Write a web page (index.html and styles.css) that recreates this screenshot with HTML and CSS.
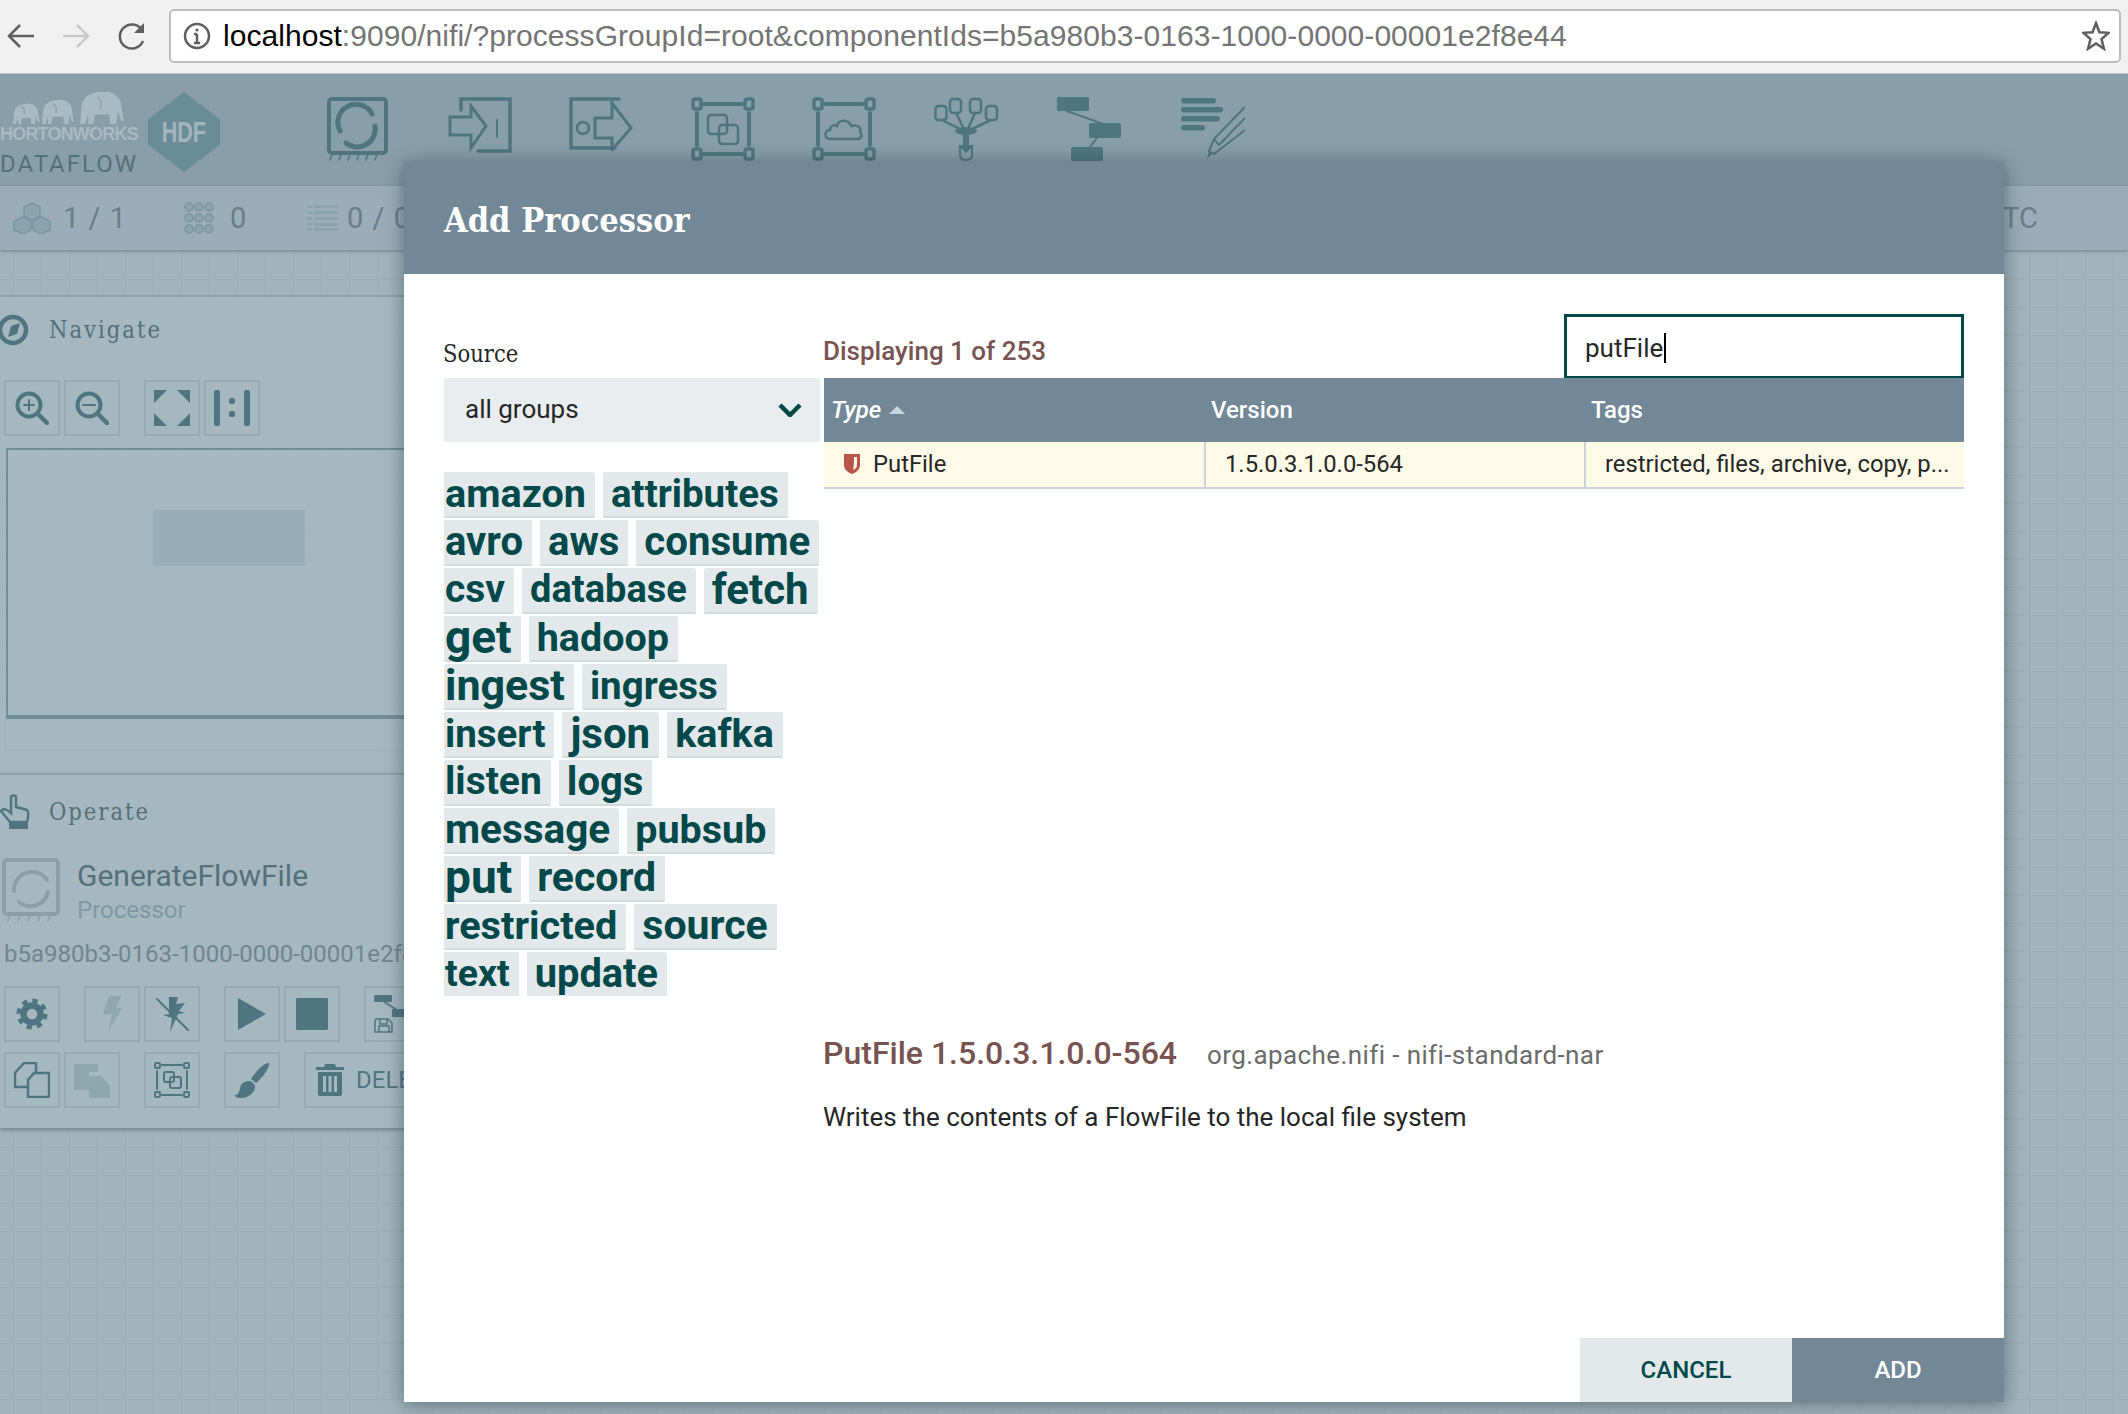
FILE: index.html
```html
<!DOCTYPE html>
<html lang="en">
<head>
    <meta charset="UTF-8">
    <title>NiFi</title>
    <link rel="stylesheet" href="styles.css">
</head>
<body>

<!-- browser chrome -->
<div class="browser-bar">
    <svg class="nav-icon nav-back" width="28" height="28" viewBox="0 0 28 28"><path d="M27 14H3M13 3L2 14l11 11"/></svg>
    <svg class="nav-icon nav-forward" width="28" height="28" viewBox="0 0 28 28"><path d="M1 14h24M15 3l11 11-11 11"/></svg>
    <svg class="nav-icon nav-reload" width="30" height="28" viewBox="0 0 30 28"><path d="M25 19a12 12 0 1 1-1-11"/><path class="solid" d="M26 1v10H16z"/></svg>
    <div class="address-box">
        <svg class="info-icon" width="28" height="28" viewBox="0 0 28 28"><circle cx="14" cy="14" r="12"/><path d="M14 12v9M11 21h6M11 12h3"/><circle class="dot" cx="14" cy="8" r="1.6"/></svg>
        <span class="url"><span class="url-host">localhost</span>:9090/nifi/?processGroupId=root&amp;componentIds=b5a980b3-0163-1000-0000-00001e2f8e44</span>
        <svg class="star-icon" width="28" height="30" viewBox="0 0 28 30"><path d="M14 2l3.400 9.200 9.100.6-7 6.300 2.400 9.600-7.900-5.300-7.900 5.300 2.400-9.600-7-6.300 9.100-.6z"/></svg>
    </div>
</div>

<div class="app">

    <div class="app-header">
        <div class="logo">
            <div class="logo-text">
                <svg class="elephants" width="126" height="32" viewBox="0 0 126 32">
                    <path transform="translate(13 12)" d="M0 20L1 8C2 3 7 0 13 0c6-1 11 2 12 8l1 8 1 2h-2l-2-6-1 8h-4v-6H9l-1 6H5v-6l-2 6z"/>
                    <path transform="translate(42 8) scale(1.200)" d="M0 20L1 8C2 3 7 0 13 0c6-1 11 2 12 8l1 8 1 2h-2l-2-6-1 8h-4v-6H9l-1 6H5v-6l-2 6z"/>
                    <path transform="translate(80 0) scale(1.650 1.600)" d="M0 20L1 8C2 3 7 0 13 0c6-1 11 2 12 8l1 8 1 2h-2l-2-6-1 8h-4v-6H9l-1 6H5v-6l-2 6z"/>
                    <path class="elephant-ear" d="M21 15c3 0 4 3 3 7M53 12c3 1 4 4 3 9M97 5c4 2 5 7 3 13"/>
                </svg>
                <div class="logo-brand">HORTONWORKS</div>
                <div class="logo-product">DATAFLOW</div>
            </div>
            <div class="logo-hex"><span>HDF</span></div>
        </div>

        <div class="toolbar">
            <svg width="64" height="64" viewBox="0 0 64 64"><rect class="line" x="3" y="2" width="57" height="54" rx="3" stroke-width="4"/><path class="line" d="M14 34A18 18 0 0 1 46 17M49 29A18 18 0 0 1 20 46" stroke-width="5"/><path class="line" d="M6 57l-2 6M15 57l-2 6M24 57l-2 6M33 57l-2 6M42 57l-2 6M51 57l-2 6" stroke-width="1.500"/></svg>
            <svg width="64" height="56" viewBox="0 0 64 56"><path class="line" d="M13 13V2h49v52H30" stroke-width="3.500"/><path class="line" d="M2 20h21V9l15 20-15 22V38H2z" stroke-width="3"/><path class="line" d="M49 23v17" stroke-width="2"/></svg>
            <svg width="64" height="54" viewBox="0 0 64 54"><path class="line" d="M50 2H2v49h44" stroke-width="3.500"/><circle class="line" cx="14" cy="31" r="6" stroke-width="2.500"/><path class="line" d="M26 21h17V6l19 25-19 22V41H26z" stroke-width="3"/></svg>
            <svg width="64" height="64" viewBox="0 0 64 64"><g class="line" stroke-width="3.500"><rect x="2" y="2" width="8" height="10" rx="2"/><rect x="54" y="2" width="8" height="10" rx="2"/><rect x="2" y="52" width="8" height="10" rx="2"/><rect x="54" y="52" width="8" height="10" rx="2"/><path stroke-width="4" d="M13 7h38M13 57h38M6 16v32M58 16v32"/><rect stroke-width="2.500" x="17" y="18" width="19" height="19" rx="3"/><rect stroke-width="2.500" x="28" y="28" width="19" height="19" rx="3"/></g></svg>
            <svg width="64" height="64" viewBox="0 0 64 64"><g class="line" stroke-width="3.500"><rect x="2" y="2" width="8" height="10" rx="2"/><rect x="54" y="2" width="8" height="10" rx="2"/><rect x="2" y="52" width="8" height="10" rx="2"/><rect x="54" y="52" width="8" height="10" rx="2"/><path stroke-width="4" d="M13 7h38M13 57h38M6 16v32M58 16v32"/><path stroke-width="2.500" d="M18 42c-6 0-6-9 0-9 0-4 4-6 7-4 1-7 12-7 14 0 7-2 11 2 9 6 3 3 1 7-3 7z"/></g></svg>
            <svg width="66" height="64" viewBox="0 0 66 64"><g class="line" stroke-width="2.500"><rect x="1.500" y="9" width="11" height="14" rx="3"/><rect x="16" y="2" width="11" height="14" rx="3"/><rect x="36" y="2" width="11" height="14" rx="3"/><rect x="52" y="9" width="11" height="14" rx="3"/><path d="M8 23l20 10M22 16l8 16M41 16l-7 16M57 23l-21 10"/><path d="M26 59v-9M38 50v9a6 4 0 0 1-12 0" stroke-width="2"/></g><ellipse class="solid" cx="32" cy="34" rx="11" ry="4"/><path class="solid" d="M29 36h6v12h5l-8 8-8-8h5z"/></svg>
            <svg width="66" height="64" viewBox="0 0 66 64"><g class="solid"><rect x="0" y="0" width="32" height="14" rx="2"/><rect x="32" y="26" width="32" height="15" rx="2"/><rect x="14" y="50" width="32" height="14" rx="2"/></g><path class="line" d="M10 14l36 13M40 41l-8 10" stroke-width="2"/></svg>
            <svg width="64" height="64" viewBox="0 0 64 64"><g class="solid"><rect x="0" y="1" width="35" height="5.500" rx="2.700"/><rect x="0" y="10" width="42" height="5.500" rx="2.700"/><rect x="0" y="19" width="39" height="5.500" rx="2.700"/><rect x="0" y="28" width="24" height="5.500" rx="2.700"/><path d="M26 62l2-9 4 3z"/></g><path class="line" d="M64 10L33 42l-5 12 5 3 31-24M64 21L38 48M33 42l4 5" stroke-width="2"/></svg>
        </div>
    </div>

    <div class="stats-bar">
        <svg class="stat-icon" width="38" height="32" viewBox="0 0 38 32"><g class="solid stat-outline"><path d="M19 1l8 4v9l-8 4-8-4V5z"/><path d="M10 15l8 4v9l-8 4-9-4v-9z"/><path d="M28 15l9 4v9l-9 4-8-4v-9z"/></g></svg>
        <span class="stat-value stat-procs">1 / 1</span>
        <svg class="stat-icon stat-dots" width="30" height="32" viewBox="0 0 30 32"><g class="solid stat-outline"><circle cx="5" cy="5" r="4"/><circle cx="15" cy="5" r="4"/><circle cx="25" cy="5" r="4"/><circle cx="5" cy="16" r="4"/><circle cx="15" cy="16" r="4"/><circle cx="25" cy="16" r="4"/><circle cx="5" cy="27" r="4"/><circle cx="15" cy="27" r="4"/><circle cx="25" cy="27" r="4"/></g></svg>
        <span class="stat-value stat-threads">0</span>
        <svg class="stat-icon stat-list" width="31" height="26" viewBox="0 0 31 26"><g class="solid"><rect y="0" width="5" height="3"/><rect x="7" y="0" width="24" height="3"/><rect y="6" width="5" height="3"/><rect x="7" y="6" width="24" height="3"/><rect y="12" width="5" height="3"/><rect x="7" y="12" width="24" height="3"/><rect y="18" width="5" height="3"/><rect x="7" y="18" width="24" height="3"/><rect y="23" width="5" height="3"/><rect x="7" y="23" width="24" height="3"/></g></svg>
        <span class="stat-value stat-queue">0 / 0</span>
        <span class="stat-value stat-time">UTC</span>
    </div>

    <div class="canvas">

        <div class="panel panel-navigate">
            <div class="panel-title">
                <svg class="panel-icon" width="32" height="32" viewBox="0 0 32 32"><circle class="line" cx="15" cy="16" r="13" stroke-width="4.500"/><path class="solid" d="M22 9l-3 11-9 3 3-11z"/></svg>
                <span>Navigate</span>
            </div>
            <div class="btn-row">
                <div class="btn-group">
                    <div class="tool-btn"><svg width="34" height="34" viewBox="0 0 34 34"><circle class="line" cx="14" cy="14" r="11.500" stroke-width="4"/><path class="line" d="M23 23l9 9" stroke-width="4.500"/><path class="line" d="M9 14h10M14 9v10" stroke-width="2"/></svg></div>
                    <div class="tool-btn"><svg width="34" height="34" viewBox="0 0 34 34"><circle class="line" cx="14" cy="14" r="11.500" stroke-width="4"/><path class="line" d="M23 23l9 9" stroke-width="4.500"/><path class="line" d="M8 14h12" stroke-width="2"/></svg></div>
                </div>
                <div class="btn-group">
                    <div class="tool-btn"><svg width="36" height="36" viewBox="0 0 36 36"><path class="solid" d="M0 0h13L0 13zM36 0v13L23 0zM0 36V23l13 13zM36 36H23l13-13z"/></svg></div>
                    <div class="tool-btn"><svg width="36" height="36" viewBox="0 0 36 36"><g class="solid"><rect x="0" width="6" height="36" rx="2"/><rect x="30" width="6" height="36" rx="2"/><rect x="15" y="8" width="6" height="6" rx="2"/><rect x="15" y="21" width="6" height="6" rx="2"/></g></svg></div>
                </div>
            </div>
            <div class="birdseye"><div class="birdseye-view"></div></div>
            <div class="birdseye-foot"></div>
        </div>

        <div class="panel panel-operate">
            <div class="panel-title">
                <svg class="panel-icon" width="30" height="36" viewBox="0 0 30 36"><path class="line" d="M11 17V3c0-2 5-2 5 0v10l11 3c2 1 1 9 0 12H10L1 17c2-3 6-2 10 2z" stroke-width="2.500"/><path class="solid" d="M9 28h19v7H9z"/></svg>
                <span>Operate</span>
            </div>
            <div class="selection">
                <svg class="selection-icon" width="60" height="64" viewBox="0 0 60 64"><rect class="grey-line" x="2" y="2" width="54" height="54" rx="3" stroke-width="4"/><path class="grey-line" d="M12 33A18 18 0 0 1 45 22M46 34A18 18 0 0 1 17 44" stroke-width="4"/><path class="grey-line" d="M8 57l-2 6M18 57l-2 6M28 57l-2 6M38 57l-2 6M48 57l-2 6" stroke-width="1.500"/></svg>
                <div>
                    <div class="selection-name">GenerateFlowFile</div>
                    <div class="selection-type">Processor</div>
                </div>
            </div>
            <div class="selection-id">b5a980b3-0163-1000-0000-00001e2f8e44</div>
            <div class="btn-row btn-row-first">
                <div class="btn-group">
                    <div class="tool-btn"><svg width="32" height="32" viewBox="0 0 32 32"><circle class="dash" cx="16" cy="16" r="13" stroke-width="5" stroke-dasharray="5.200 5"/><circle class="line" cx="16" cy="16" r="8.500" stroke-width="6.500"/></svg></div>
                </div>
                <div class="btn-group">
                    <div class="tool-btn"><svg class="faded" width="20" height="36" viewBox="0 0 20 36"><path class="solid" d="M7 0h12l-5 12h6L6 36l4-18H1z"/></svg></div>
                    <div class="tool-btn"><svg width="34" height="36" viewBox="0 0 34 36"><path class="solid" d="M14 1h9l-2 7 9-1-6 8 6 2-7 1-8 18 2-14-9-3 6-1z"/><path class="line" d="M2 3l31 31" stroke-width="2"/></svg></div>
                </div>
                <div class="btn-group">
                    <div class="tool-btn"><svg width="28" height="32" viewBox="0 0 28 32"><path class="solid" d="M0 0l28 16L0 32z"/></svg></div>
                    <div class="tool-btn"><svg width="32" height="32" viewBox="0 0 32 32"><rect class="solid" width="32" height="32" rx="1"/></svg></div>
                </div>
                <div class="btn-group">
                    <div class="tool-btn"><svg width="36" height="38" viewBox="0 0 36 38"><g class="solid"><rect width="18" height="7" rx="1"/><rect x="18" y="14" width="18" height="8" rx="1"/></g><path class="line" d="M9 6l14 9M1 26a2 2 0 0 1 2-2h11l4 4v9H1zM6 24v5h7v-5M5 37v-6h10v6" stroke-width="1.500"/></svg></div>
                </div>
            </div>
            <div class="btn-row btn-row-tight">
                <div class="btn-group">
                    <div class="tool-btn"><svg width="36" height="36" viewBox="0 0 36 36"><path class="line" d="M14 25H1V11l9-10h12v9" stroke-width="2.500"/><path class="line" d="M14 35V18l6-7h15v24z" stroke-width="2.500"/></svg></div>
                    <div class="tool-btn"><svg class="faded" width="36" height="36" viewBox="0 0 36 36"><path class="solid" d="M0 2h24v8h-9v18H0z"/><path class="solid" d="M15 14h12l9 10v12H15z"/></svg></div>
                </div>
                <div class="btn-group">
                    <div class="tool-btn"><svg width="36" height="36" viewBox="0 0 36 36"><g class="line" stroke-width="2"><rect x="1" y="1" width="5" height="5" rx="1"/><rect x="30" y="1" width="5" height="5" rx="1"/><rect x="1" y="30" width="5" height="5" rx="1"/><rect x="30" y="30" width="5" height="5" rx="1"/><path d="M8 3h20M8 33h20M3 9v18M33 9v18"/><rect x="10" y="10" width="10" height="10" rx="2"/><rect x="16" y="15" width="11" height="11" rx="2"/></g></svg></div>
                </div>
                <div class="btn-group">
                    <div class="tool-btn"><svg width="36" height="36" viewBox="0 0 36 36"><path class="solid" d="M35 1c1 4-6 15-13 20l-5-4C22 9 31 0 35 1zM15 19c3 0 6 3 6 6 0 6-7 11-14 11-4 0-6-1-7-3 4 1 5-3 6-7 1-5 5-7 9-7z"/></svg></div>
                </div>
                <div class="btn-group">
                    <div class="tool-btn tool-btn-wide"><svg width="28" height="32" viewBox="0 0 28 32"><path class="solid" d="M9 0h10l1 3h8v3H0V3h8zM2 8h24v22a2 2 0 0 1-2 2H4a2 2 0 0 1-2-2zm5 4v16h3V12zm5.500 0v16h3V12zM18 12v16h3V12z" fill-rule="evenodd"/></svg><span>DELETE</span></div>
                </div>
            </div>
        </div>
    </div>

    <!-- modal over everything else -->
    <div class="dialog">
        <div class="dialog-header">Add Processor</div>
        <div class="dialog-body">
            <div class="source-col">
                <div class="source-label">Source</div>
                <div class="source-select">
                    <span>all groups</span>
                    <svg width="24" height="14" viewBox="0 0 24 14"><path d="M2 2l10 10L22 2"/></svg>
                </div>
                <!-- font size comes from how often the tag is used -->
                <div class="tag-cloud">
                    <div class="tag-row"><span class="tag" style="font-size:39.600px">amazon</span><span class="tag" style="font-size:38.500px">attributes</span></div>
                    <div class="tag-row"><span class="tag" style="font-size:40px">avro</span><span class="tag" style="font-size:40px">aws</span><span class="tag" style="font-size:40.200px">consume</span></div>
                    <div class="tag-row"><span class="tag" style="font-size:39px">csv</span><span class="tag" style="font-size:38px">database</span><span class="tag" style="font-size:42px">fetch</span></div>
                    <div class="tag-row"><span class="tag" style="font-size:46px">get</span><span class="tag" style="font-size:39.500px">hadoop</span></div>
                    <div class="tag-row"><span class="tag" style="font-size:43px">ingest</span><span class="tag" style="font-size:38.500px">ingress</span></div>
                    <div class="tag-row"><span class="tag" style="font-size:38.500px">insert</span><span class="tag" style="font-size:42px">json</span><span class="tag" style="font-size:39.500px">kafka</span></div>
                    <div class="tag-row"><span class="tag" style="font-size:39px">listen</span><span class="tag" style="font-size:40px">logs</span></div>
                    <div class="tag-row"><span class="tag" style="font-size:40.500px">message</span><span class="tag" style="font-size:39.500px">pubsub</span></div>
                    <div class="tag-row"><span class="tag" style="font-size:46px">put</span><span class="tag" style="font-size:41px">record</span></div>
                    <div class="tag-row"><span class="tag" style="font-size:39.700px">restricted</span><span class="tag" style="font-size:41px">source</span></div>
                    <div class="tag-row"><span class="tag" style="font-size:37.500px">text</span><span class="tag" style="font-size:39.800px">update</span></div>
                </div>
            </div>
            <div class="results-col">
                <div class="results-head">
                    <div class="results-count">Displaying 1 of 253</div>
                    <div class="search-box">putFile<span class="caret"></span></div>
                </div>
                <div class="table-head">
                    <div class="col-type"><em>Type</em><span class="sort-arrow"></span></div>
                    <div>Version</div>
                    <div>Tags</div>
                </div>
                <div class="table-row">
                    <div class="cell cell-type">
                        <svg width="18" height="22" viewBox="0 0 18 22"><path class="shield" d="M1 1h16v11c0 5-5 8-8 9-3-1-8-4-8-9z"/><path class="shield-in" d="M11 4h3v8c0 3-2 4-4 5 1-4 1-9 1-13z"/></svg>
                        PutFile
                    </div>
                    <div class="cell">1.5.0.3.1.0.0-564</div>
                    <div class="cell">restricted, files, archive, copy, p...</div>
                </div>
                <div class="details-head">
                    <span class="details-name">PutFile 1.5.0.3.1.0.0-564</span>
                    <span class="details-bundle">org.apache.nifi - nifi-standard-nar</span>
                </div>
                <div class="details-desc">Writes the contents of a FlowFile to the local file system</div>
            </div>
        </div>
        <div class="dialog-footer">
            <div class="dialog-btn btn-cancel">CANCEL</div>
            <div class="dialog-btn btn-add">ADD</div>
        </div>
    </div>
</div>

</body>
</html>
```

FILE: styles.css
```css
html, body{
    margin: 0;
    height: 1414px;
    overflow: hidden;
}
body{
    font-family: Roboto, sans-serif;
    background-color: #a1b4bc;
}

/* shared svg paint for the dimmed app icons */
.solid{ fill: #4f7680; }
.line{ fill: none; stroke: #4f7680; stroke-linecap: round; }
.dash{ fill: none; stroke: #4f7680; }
.grey-line{ fill: none; stroke: #8d9ea8; stroke-linecap: round; }
.faded{ opacity: 0.25; }

/* browser */
.browser-bar{
    box-sizing: border-box;
    height: 74px;
    display: flex;
    align-items: center;
    background-color: #f1f1f1;
    border-bottom: 1px solid #c4c4c4;
    padding: 0 7px 2px 7px;
}
.nav-icon{
    flex: none;
    fill: none;
    stroke-width: 2.500;
}
.nav-icon .solid{ fill: #5f5f5f; stroke: none; }
.nav-back{ stroke: #5f5f5f; }
.nav-forward{ stroke: #c9c9c9; margin-left: 27px; }
.nav-reload{ stroke: #5f5f5f; margin-left: 28px; margin-right: 21px; }
.address-box{
    flex: 1;
    box-sizing: border-box;
    height: 54px;
    display: flex;
    align-items: center;
    background-color: #fff;
    border: 2px solid #bcbcbc;
    border-radius: 5px;
    padding: 0 9px 0 12px;
}
.info-icon{
    flex: none;
    fill: none;
    stroke: #5f5f5f;
    stroke-width: 2.500;
}
.info-icon .dot{ fill: #5f5f5f; stroke: none; }
.url{
    flex: 1;
    margin-left: 12px;
    font-family: "Liberation Sans", sans-serif;
    font-size: 30px;
    letter-spacing: 0.05px;
    color: #757575;
    white-space: nowrap;
}
.url-host{ color: #000; }
.star-icon{
    flex: none;
    fill: none;
    stroke: #5f5f5f;
    stroke-width: 2.500;
}

/* app header */
.app{
    position: relative;
    height: 1340px;
    overflow: hidden;
    display: flex;
    flex-direction: column;
}
.app-header{
    height: 112px;
    flex: none;
    display: flex;
    background-color: #889ea9;
}
.logo{
    width: 326px;
    flex: none;
    display: flex;
    align-items: flex-start;
    padding-top: 18px;
    box-sizing: border-box;
}
.logo-text{
    width: 148px;
    flex: none;
}
.elephants{
    display: block;
    fill: #a9bac2;
}
.elephant-ear{
    fill: none;
    stroke: #8ea3ad;
    stroke-width: 1.500;
}
.logo-brand{
    font-family: "Liberation Sans", sans-serif;
    font-weight: bold;
    font-size: 18px;
    line-height: 20px;
    letter-spacing: -0.8px;
    color: #a9bac2;
}
.logo-product{
    margin-top: 5px;
    font-size: 24px;
    line-height: 30px;
    letter-spacing: 2px;
    color: #567079;
}
.logo-hex{
    width: 72px;
    height: 80px;
    flex: none;
    display: flex;
    align-items: center;
    justify-content: center;
    background-color: #6a8b98;
    clip-path: polygon(50% 0, 100% 34%, 100% 66%, 50% 100%, 0 66%, 0 34%);
    color: #a3b5bd;
    font-family: "Liberation Sans", sans-serif;
    font-weight: bold;
    font-size: 30px;
}
.logo-hex span{
    transform: scaleX(0.72);
}
.toolbar{
    flex: 1;
    display: flex;
    align-items: flex-start;
    gap: 57.5px;
    padding-top: 23px;
}

/* stats */
.stats-bar{
    height: 64px;
    flex: none;
    display: flex;
    align-items: center;
    position: relative;
    z-index: 1;
    background-color: #9aadb8;
    box-shadow: 0 1px 3px rgba(70, 90, 100, 0.5);
    padding-left: 13px;
}
.stat-icon .solid{ fill: #8ca4b0; }
.stat-icon .stat-outline{ stroke: #7a95a3; stroke-width: 1.500; }
.stat-value{
    font-size: 29px;
    letter-spacing: 1px;
    color: #6b7d88;
}
.stat-procs{ margin-left: 12px; width: 121px; }
.stat-threads{ margin-left: 16px; width: 77px; }
.stat-queue{ margin-left: 9px; }
.stat-time{
    margin-left: auto;
    margin-right: 90px;
    letter-spacing: 0;
}

/* canvas + panels */
.canvas{
    flex: 1;
    padding-top: 45px;
    background-color: #a1b4bc;
    background-image:
        linear-gradient(to right, #99adb5 1px, transparent 1px),
        linear-gradient(to bottom, #99adb5 1px, transparent 1px);
    background-size: 28px 28px;
    background-position: 13px 1px;
}
.panel{
    width: 560px;
    box-sizing: border-box;
    background-color: rgba(168, 185, 193, 0.7);
    border-top: 2px solid #8ba2ac;
}
.panel-navigate{ height: 478px; }
.panel-operate{
    height: 355px;
    box-shadow: 0 2px 4px rgba(70, 90, 100, 0.5);
}
.panel-title{
    height: 66px;
    display: flex;
    align-items: center;
    box-sizing: border-box;
    font-family: "DejaVu Serif", serif;
    font-stretch: condensed;
    font-size: 23.500px;
    letter-spacing: 2px;
    color: #54707b;
}
.panel-icon{
    margin-left: -2px;
    margin-right: 19px;
    flex: none;
}
.panel-operate .panel-title{ height: 74px; }
.panel-operate .panel-icon{ margin-left: 0; }
.btn-row{
    display: flex;
    gap: 24px;
    padding: 17px 0 0 4px;
}
.btn-row-first{ padding-top: 17px; }
.btn-row-tight{ padding-top: 10px; }
.btn-group{
    display: flex;
    gap: 4px;
}
.tool-btn{
    box-sizing: border-box;
    width: 56px;
    height: 56px;
    display: flex;
    align-items: center;
    justify-content: center;
    border: 2px solid #95aab3;
}
.tool-btn-wide{
    width: 200px;
    justify-content: flex-start;
    padding-left: 10px;
    gap: 12px;
    font-size: 24px;
    color: #4f7680;
}
.birdseye{
    box-sizing: border-box;
    height: 271px;
    margin: 12px 0 0 6px;
    border: 2px solid #718e9b;
    border-bottom-width: 4px;
    display: flex;
    padding: 60px 0 0 145px;
}
.birdseye-view{
    width: 152px;
    height: 56px;
    background-color: #98adb9;
}
.birdseye-foot{
    height: 31px;
    margin-left: 5px;
    border: 1px solid #9cb0b9;
    border-top: 0;
}
.selection{
    display: flex;
    gap: 15px;
    margin-top: 9px;
    padding-left: 2px;
}
.selection-icon{ flex: none; }
.selection-name{
    font-size: 30px;
    line-height: 36px;
    color: #54707b;
}
.selection-type{
    font-size: 24px;
    line-height: 32px;
    color: #7f97a4;
}
.selection-id{
    margin: 13px 0 0 4px;
    font-size: 24px;
    line-height: 30px;
    white-space: nowrap;
    color: #71858f;
}

/* dialog */
.dialog{
    position: absolute;
    z-index: 2;
    left: 404px;
    top: 88px;
    width: 1600px;
    height: 1240px;
    display: flex;
    flex-direction: column;
    background-color: #fff;
    box-shadow: 0 2px 18px rgba(40, 55, 65, 0.55);
}
.dialog-header{
    height: 112px;
    box-sizing: border-box;
    flex: none;
    display: flex;
    align-items: center;
    padding: 3px 0 0 40px;
    background-color: #728897;
    font-family: "DejaVu Serif", serif;
    font-stretch: condensed;
    font-weight: bold;
    font-size: 34px;
    color: #fff;
}
.dialog-body{
    flex: 1;
    display: flex;
    gap: 4px;
    padding: 40px 40px 0 40px;
}
.source-col{
    width: 376px;
    flex: none;
}
.source-label{
    height: 64px;
    box-sizing: border-box;
    padding-top: 26px;
    margin-left: -1px;
    font-family: "DejaVu Serif", serif;
    font-stretch: condensed;
    font-size: 23.500px;
    line-height: 28px;
    color: #262626;
}
.source-select{
    height: 64px;
    display: flex;
    align-items: center;
    justify-content: space-between;
    padding: 0 18px 3px 21px;
    box-sizing: border-box;
    background-color: #e9edf0;
    font-size: 26px;
    color: #262626;
}
.source-select svg{
    fill: none;
    stroke: #004849;
    stroke-width: 4.500;
    margin-top: 3px;
}
.tag-cloud{
    margin-top: 30px;
    height: 524px;
    overflow: hidden;
}
.tag-row{
    display: flex;
    gap: 8px;
    height: 48px;
}
.tag{
    box-sizing: border-box;
    height: 46px;
    padding: 0 9px 0 8px;
    background-color: #e3e8eb;
    border-bottom: 2px solid #d2dade;
    border-radius: 2px;
    font-weight: bold;
    line-height: 43px;
    color: #004849;
    white-space: nowrap;
}
.tag:first-child{ padding-left: 1px; }
.results-col{
    flex: 1;
    min-width: 0;
}
.results-head{
    height: 64px;
    display: flex;
    justify-content: space-between;
}
.results-count{
    padding-top: 21px;
    margin-left: -1px;
    font-size: 26px;
    line-height: 32px;
    font-weight: 500;
    color: #775351;
}
.search-box{
    box-sizing: border-box;
    width: 400px;
    height: 64px;
    display: flex;
    align-items: center;
    padding: 2px 0 0 18px;
    border: 3px solid #004849;
    border-bottom-width: 2px;
    font-size: 26px;
    color: #262626;
}
.caret{
    width: 2px;
    height: 30px;
    margin-left: 1px;
    background-color: #000;
}
.table-head, .table-row{
    display: grid;
    grid-template-columns: 380px 380px 1fr;
}
.table-head{
    height: 64px;
    align-items: center;
    background-color: #728897;
    color: #fff;
    font-size: 24px;
    font-weight: 500;
}
.table-head div{ padding-left: 7px; }
.table-head em{ font-weight: 500; }
.col-type{
    display: flex;
    align-items: center;
}
.sort-arrow{
    width: 0;
    height: 0;
    margin-left: 8px;
    border-left: 8px solid transparent;
    border-right: 8px solid transparent;
    border-bottom: 8px solid #c7d4dc;
}
.table-row{
    height: 47px;
    box-sizing: border-box;
    background-color: #fefae8;
    border-bottom: 2px solid #c9d3d8;
}
.cell{
    display: flex;
    align-items: center;
    padding: 0 0 2px 19px;
    border-left: 2px solid #c9d3d8;
    font-size: 23.800px;
    color: #262626;
    white-space: nowrap;
}
.cell-type{
    border-left: 0;
    padding-left: 19px;
    gap: 12px;
}
.shield{ fill: #ba554a; }
.shield-in{ fill: #fefae8; }
.details-head{
    margin-top: 545px;
    margin-left: -1px;
    display: flex;
    align-items: baseline;
    gap: 30px;
}
.details-name{
    font-size: 32px;
    font-weight: 500;
    color: #775351;
}
.details-bundle{
    font-size: 26px;
    letter-spacing: 0.4px;
    color: #6b6b6b;
}
.details-desc{
    margin: 30px 0 0 -1px;
    font-size: 26px;
    color: #262626;
}
.dialog-footer{
    flex: none;
    display: flex;
    justify-content: flex-end;
}
.dialog-btn{
    width: 212px;
    height: 64px;
    display: flex;
    align-items: center;
    justify-content: center;
    font-size: 24px;
    font-weight: 500;
}
.btn-cancel{
    background-color: #e3e8eb;
    color: #004849;
}
.btn-add{
    background-color: #728897;
    color: #fff;
}
```
